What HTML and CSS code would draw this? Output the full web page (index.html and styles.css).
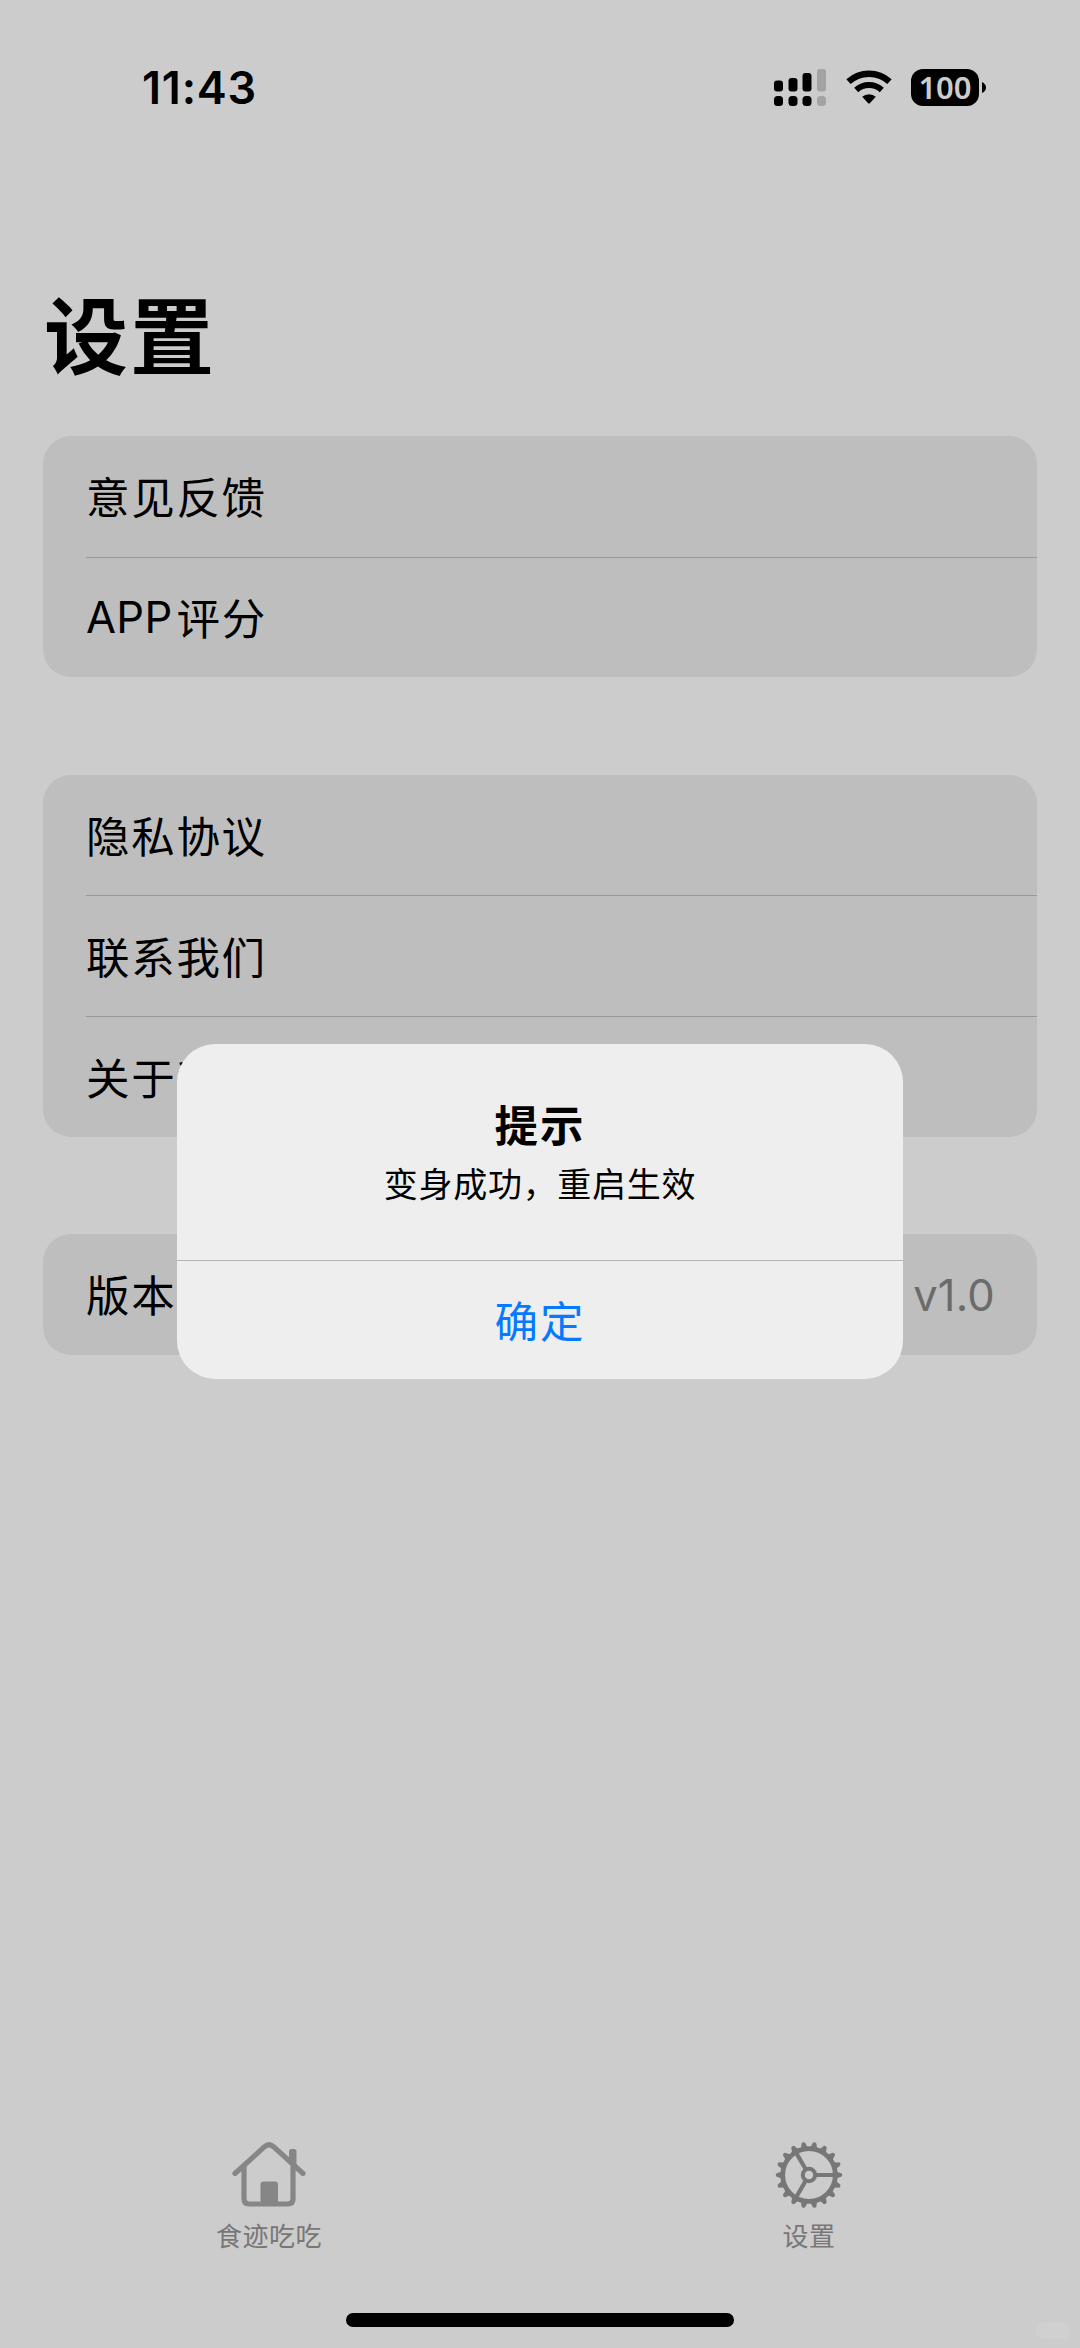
FILE: index.html
```html
<!DOCTYPE html>
<html lang="zh-CN">
<head>
<meta charset="utf-8">
<title>设置</title>
<link rel="stylesheet" href="styles.css">
</head>
<body>
<div class="screen">
  <header class="status">
    <span class="time">11:43</span>
    <div class="indicators">
      <svg class="signal" width="52" height="37" viewBox="0 0 52 37">
        <rect x="0" y="11.5" width="9" height="11" rx="3"/><rect x="14.5" y="9" width="9" height="13.5" rx="3"/><rect x="28.5" y="4" width="9" height="18.5" rx="3"/><rect class="dim" x="43" y="0" width="9" height="22.5" rx="3"/>
        <rect x="0" y="27" width="9" height="10" rx="3.5"/><rect x="14.5" y="27" width="9" height="10" rx="3.5"/><rect x="28.5" y="27" width="9" height="10" rx="3.5"/><rect class="dim" x="43" y="27" width="9" height="10" rx="3.5"/>
      </svg>
      <svg class="wifi" width="46" height="35" viewBox="0 0 46 35">
        <path d="M2.500 11.700A30.300 30.300 0 0 1 43.500 11.700" fill="none" stroke="#000" stroke-width="6.400"/>
        <path d="M10.200 20A19 19 0 0 1 35.800 20" fill="none" stroke="#000" stroke-width="6"/>
        <path d="M16.200 26.800A10 10 0 0 1 29.800 26.800L23.800 33.300Q23 34.100 22.200 33.300Z"/>
      </svg>
      <div class="battery"><span class="level">100</span></div>
      <svg class="cap" width="4" height="11" viewBox="0 0 4 11"><path d="M0 0Q4 2 4 5.5T0 11Z"/></svg>
    </div>
  </header>
  <main class="content">
    <h1 class="title">设置</h1>
    <section class="card">
      <div class="row">意见反馈</div>
      <div class="row"><span class="latin">APP</span>评分</div>
    </section>
    <section class="card">
      <div class="row">隐私协议</div>
      <div class="row">联系我们</div>
      <div class="row">关于我们</div>
    </section>
    <section class="card">
      <div class="row">版本号<span class="value">v1.0</span></div>
    </section>
  </main>
  <nav class="tabs">
    <div class="tab home">
      <svg width="74" height="66" viewBox="0 0 74 66" fill="none" stroke="#868686" stroke-linejoin="round" stroke-linecap="round">
        <path d="M3 31.500L32.500 4.700Q37 .8 41.500 4.700L71 31.500" stroke-width="5.200"/>
        <path d="M12 25V57Q12 62 17 62H56Q61 62 61 57V25" stroke-width="5.200"/>
        <path d="M57 20V9.500Q57 7 59.500 7H62Q64.500 7 64.500 9.500V27Z" fill="#868686" stroke="none"/>
        <path d="M28.500 60V42.500Q28.500 39.500 31.500 39.500H43Q46 39.500 46 42.500V60Z" fill="#868686" stroke="none"/>
      </svg>
      <span>食迹吃吃</span>
    </div>
    <div class="tab settings">
      <svg width="68" height="68" viewBox="-34 -34 68 68" fill="none" stroke="#777">
        <circle r="26.300" stroke-width="4.800"/>
        <g id="teeth" fill="#777" stroke="none"></g>
        <circle r="6.200" stroke-width="4"/>
        <path d="M7.500 0H26M-3.750 -6.500L-13 -22.500M-3.750 6.500L-13 22.500" stroke-width="4.200"/>
      </svg>
      <span>设置</span>
    </div>
  </nav>
  <div class="home-bar"></div>
  <div class="chip"></div>
  <div class="dialog">
    <div class="message"><strong class="heading">提示</strong><p class="body">变身成功，重启生效</p></div>
    <button class="confirm">确定</button>
  </div>
</div>
<script src="gear.js"></script>
</body>
</html>
```
FILE: gear.js
```js
// Eighteen evenly spaced teeth; the first lies on the horizontal spoke's axis.
const TOOTH_COUNT = 18;
const teeth = document.getElementById("teeth");
for (let i = 0; i < TOOTH_COUNT; i++) {
  const tooth = document.createElementNS("http://www.w3.org/2000/svg", "path");
  tooth.setAttribute("d", "M27 -4.200Q29 -2.500 31.600 -2.100Q33.300 -1.700 33.300 0T31.600 2.100Q29 2.500 27 4.200Z");
  tooth.setAttribute("transform", `rotate(${i * 360 / TOOTH_COUNT})`);
  teeth.append(tooth);
}
```
FILE: styles.css
```css
* { box-sizing: border-box; }
body { margin: 0; background: #ccc; color: #000; font-family: Inter, "Noto Sans CJK SC", sans-serif; }
.screen { position: relative; width: 1080px; height: 2348px; display: flex; flex-direction: column; overflow: hidden; }
.status { display: flex; justify-content: space-between; align-items: flex-start; height: 280px; padding: 69px 94px 0 142px; }
.time { font-size: 45px; font-weight: 600; line-height: 38px; letter-spacing: .8px; }
.indicators { display: flex; align-items: flex-start; }
.signal .dim { fill: #a3a3a3; }
.wifi { margin: 1px 0 0 20px; }
.battery { width: 68px; height: 37px; margin-left: 19px; border-radius: 12px; background: #000; color: #ccc; text-align: center; }
.level { display: block; font: 600 31px/36px "Noto Sans", sans-serif; letter-spacing: 0; }
.cap { margin: 13px 0 0 3px; }
.content { display: flex; flex-direction: column; padding: 0 43px; }
.title { margin: 0; height: 156px; padding-left: 1px; font-size: 84px; line-height: 115px; font-weight: 700; letter-spacing: 2px; }
.card { width: 994px; margin-bottom: 97.400px; border-radius: 28px; background: #bebebe; }
.row { display: flex; align-items: center; height: 120.670px; margin-left: 43px; padding: 0 42px 1px 0; font-size: 43.500px; letter-spacing: 1.700px; white-space: nowrap; }
.row + .row { border-top: 1px solid #999; }
.latin { letter-spacing: .3px; margin-right: 4px; }
.value { margin-left: auto; color: #6b6b6b; letter-spacing: .2px; padding-top: 3px; }
.tabs { position: absolute; left: -1px; width: 1080px; bottom: 77px; height: 130px; display: grid; grid-template-columns: 1fr 1fr; }
.tab { display: flex; flex-direction: column; align-items: center; color: #777; font-size: 26px; }
.tab svg { height: 68px; }
.tab span { margin-top: 9px; line-height: 38px; letter-spacing: .5px; }
.home-bar { position: absolute; left: 346px; top: 2313px; width: 388px; height: 14px; border-radius: 7px; background: #000; }
.chip { position: absolute; left: 1036px; top: 2323px; width: 34px; height: 16px; border-radius: 7px; background: #d0d0d0; }
.dialog { position: absolute; left: 177px; top: 1044px; width: 726px; height: 335px; display: flex; flex-direction: column; border-radius: 38px; background: #eee; overflow: hidden; }
.message { height: 216px; padding-top: 52px; text-align: center; }
.heading { display: block; font-size: 43.500px; line-height: 60px; letter-spacing: 2px; font-weight: 700; }
.body { margin: 0; font-size: 34px; line-height: 58px; letter-spacing: .7px; }
.confirm { flex: 1; margin: 0; padding: 0 0 2px; border: 0; border-top: 1px solid #b4b4b4; background: none; color: #067aff; font: inherit; font-size: 43.500px; letter-spacing: 2px; }
```
